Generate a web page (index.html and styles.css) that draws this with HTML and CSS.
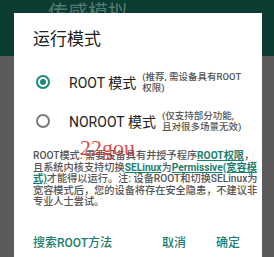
FILE: index.html
```html
<!DOCTYPE html>
<html>
<head>
<meta charset="utf-8">
<link rel="stylesheet" href="styles.css">
</head>
<body>
<div class="screen">
  <div class="appbar"><span class="apptitle">传感模拟</span></div>
  <div class="content"></div>
  <div class="dialog">
    <div class="dtitle">运行模式</div>
    <div class="option">
      <span class="radio checked"></span>
      <span class="olabel">ROOT 模式</span>
      <span class="onote">(推荐, 需设备具有ROOT<br>权限)</span>
    </div>
    <div class="option">
      <span class="radio"></span>
      <span class="olabel">NOROOT 模式</span>
      <span class="onote">(仅支持部分功能,<br>且对很多场景无效)</span>
    </div>
    <p class="desc">ROOT模式: 需要设备具有并授予程序<a class="lnk">ROOT权限</a>，<br>且系统内核支持切换<a class="lnk">SELinux</a>为<a class="lnk">Permissive(宽容模<br>式)</a>才能得以运行。注: 设备ROOT和切换SELinux为<br>宽容模式后，您的设备将存在安全隐患，不建议非<br>专业人士尝试。</p>
    <div class="actions">
      <span class="btn">搜索ROOT方法</span>
      <span class="spacer"></span>
      <span class="btn">取消</span>
      <span class="btn">确定</span>
    </div>
    <span class="watermark">22gou</span>
  </div>
</div>
</body>
</html>
```
FILE: styles.css
```css
html, body {
  margin: 0;
  padding: 0;
}
body {
  width: 274px;
  height: 257px;
  overflow: hidden;
  font-family: Roboto, "Noto Sans CJK SC", sans-serif;
}
.screen {
  position: relative;
  width: 274px;
  height: 257px;
  overflow: hidden;
  background: #5b5b5b;
  display: flex;
  flex-direction: column;
}
.appbar {
  height: 56px;
  background: #0b3c32;
  padding-left: 48px;
  box-sizing: border-box;
}
.apptitle {
  display: block;
  padding-top: 1px;
  font-size: 20px;
  line-height: 24px;
  color: #557a72;
}
.content {
  flex: 1;
}
.dialog {
  position: absolute;
  left: 14px;
  top: 13px;
  width: 248px;
  height: 244px;
  background: #fff;
  box-sizing: border-box;
  padding: 16px 0 0 19px;
}
.dtitle {
  font-size: 17px;
  line-height: 20px;
  color: #212121;
  height: 20px;
}
.dtitle + .option {
  margin-top: 13px;
}
.option {
  display: flex;
  align-items: center;
  height: 39px;
}
.radio {
  width: 14px;
  height: 14px;
  box-sizing: border-box;
  border: 2px solid #7a7a7a;
  border-radius: 50%;
  margin-left: 3px;
  margin-right: 19px;
  flex: none;
  position: relative;
}
.radio.checked {
  border-color: #1b8a77;
}
.radio.checked::after {
  content: "";
  position: absolute;
  left: 2px;
  top: 2px;
  width: 6px;
  height: 6px;
  border-radius: 50%;
  background: #1b8a77;
}
.olabel {
  font-size: 14px;
  color: #212121;
  margin-right: 6px;
  white-space: nowrap;
}
.onote {
  font-size: 9.5px;
  line-height: 11px;
  color: #555;
  font-weight: 500;
  white-space: nowrap;
}
.desc {
  margin: 10px 0 0 0;
  width: 226px;
  font-size: 10.2px;
  line-height: 11.5px;
  color: #555;
  font-weight: 500;
  letter-spacing: 0;
  white-space: nowrap;
}
.lnk {
  color: #1b7f6f;
  font-weight: 700;
  text-decoration: underline;
}
.actions {
  display: flex;
  align-items: center;
  margin-top: 27px;
  padding-right: 22px;
}
.btn {
  font-size: 12px;
  line-height: 16px;
  color: #1e7e6e;
  font-weight: 500;
}
.spacer {
  flex: 1;
}
.btn + .btn {
  margin-left: 30px;
}
.actions .spacer + .btn {
  margin-left: 0;
}
.watermark {
  position: absolute;
  left: 66px;
  top: 122px;
  font-family: "Liberation Serif", serif;
  font-size: 22px;
  color: rgba(220, 40, 40, 0.85);
  line-height: 26px;
}
```
